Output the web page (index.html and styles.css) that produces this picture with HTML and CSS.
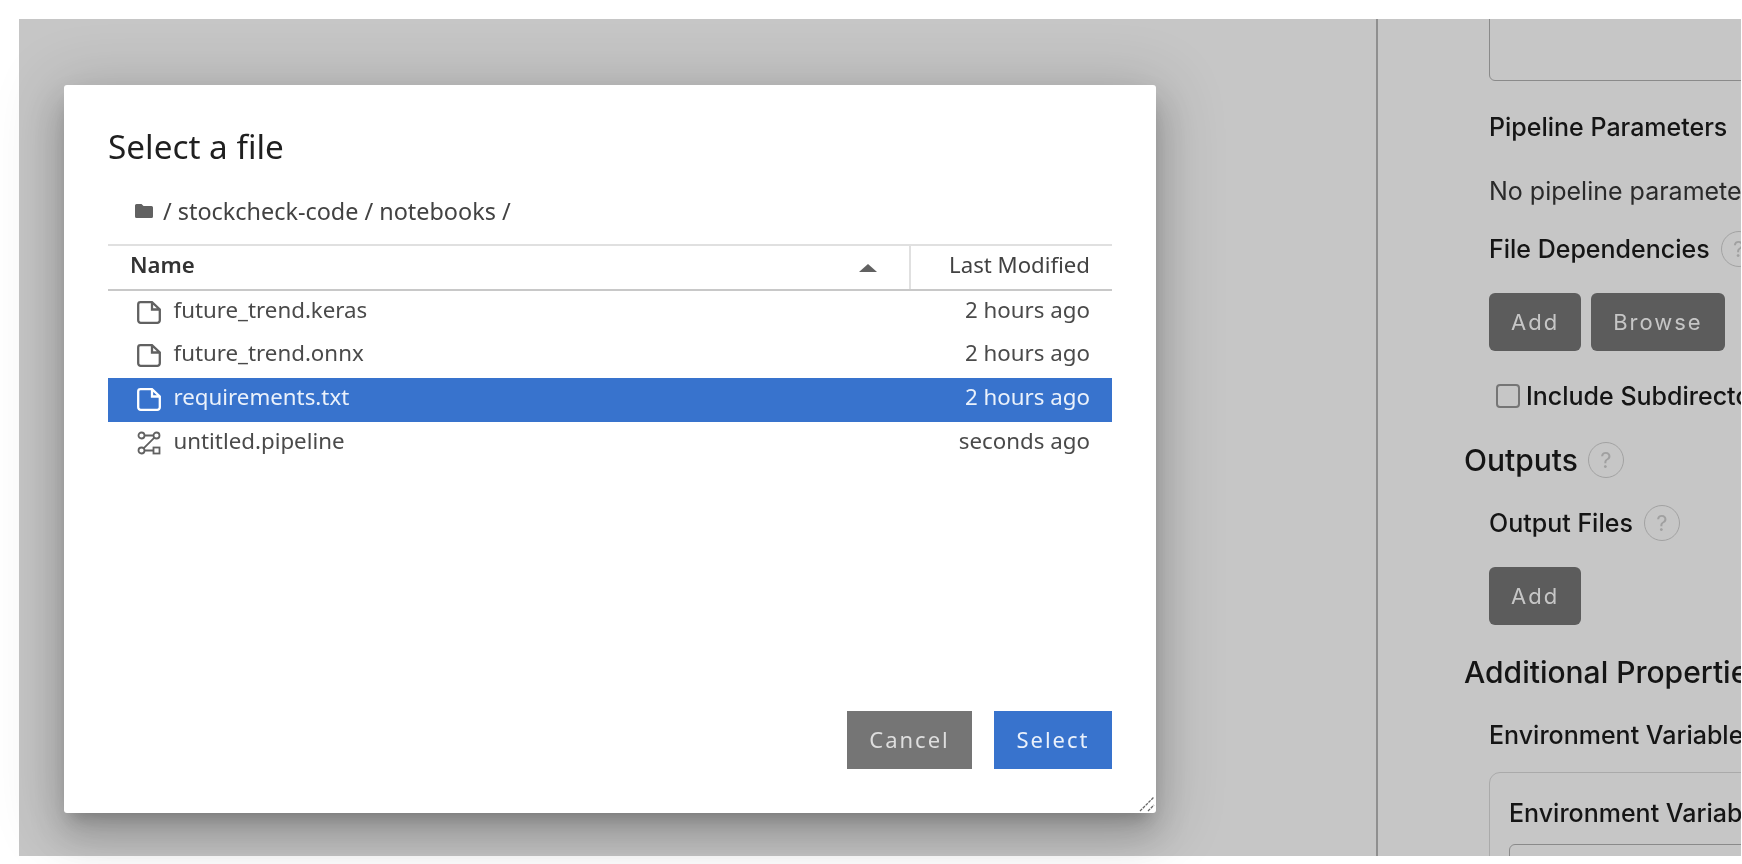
FILE: index.html
```html
<!DOCTYPE html>
<html lang="en">
<head>
<meta charset="utf-8">
<title>Select a file</title>
<link rel="stylesheet" href="styles.css">
</head>
<body>
<div class="app">
  <div class="canvas"></div>
  <aside class="panel">
    <div class="textbox"></div>
    <div class="label first">Pipeline Parameters</div>
    <div class="note">No pipeline parameters are defined.</div>
    <div class="label deps">File Dependencies <span class="help">?</span></div>
    <div class="btns"><span class="btn">Add</span><span class="btn">Browse</span></div>
    <label class="check"><span class="box"></span>Include Subdirectories</label>
    <div class="heading outs">Outputs <span class="help">?</span></div>
    <div class="label ofiles">Output Files <span class="help">?</span></div>
    <div class="btns addout"><span class="btn">Add</span></div>
    <div class="heading addl">Additional Properties</div>
    <div class="label envl">Environment Variables</div>
    <div class="envbox">
      <div class="label envin">Environment Variables</div>
      <div class="envinput"></div>
    </div>
  </aside>
</div>

<div class="dialog">
  <h1 class="title">Select a file</h1>
  <div class="crumbs">
    <svg class="folder" viewBox="0 0 18 14" width="18" height="14"><path d="M1.5 0h5l2 2h8A1.5 1.5 0 0 1 18 3.500V12.500A1.500 1.500 0 0 1 16.500 14h-15A1.500 1.500 0 0 1 0 12.500V1.500A1.500 1.500 0 0 1 1.500 0z" fill="#616161"/></svg>
    <span>/ stockcheck-code / notebooks /</span>
  </div>
  <div class="table">
    <div class="thead">
      <div class="th-name"><span class="th-text">Name</span><svg class="caret" viewBox="0 0 18 8" width="18" height="8"><path d="M9 0l9 8H0z" fill="#616161"/></svg></div>
      <div class="th-mod"><span class="th-text">Last Modified</span></div>
    </div>
    <div class="row">
      <svg class="ficon" viewBox="0 0 24 23" width="24" height="23"><path d="M3.500 1.200H15L22.800 8.500V19.300a2.500 2.500 0 0 1-2.500 2.500H3.700a2.500 2.500 0 0 1-2.500-2.500V3.500A2.300 2.300 0 0 1 3.500 1.200zM15 1.200V8.500H22.800" fill="none" stroke="currentColor" stroke-width="2.300"/></svg>
      <span class="fname">future_trend.keras</span><span class="fdate">2 hours ago</span>
    </div>
    <div class="row">
      <svg class="ficon" viewBox="0 0 24 23" width="24" height="23"><path d="M3.500 1.200H15L22.800 8.500V19.300a2.500 2.500 0 0 1-2.500 2.500H3.700a2.500 2.500 0 0 1-2.500-2.500V3.500A2.300 2.300 0 0 1 3.500 1.200zM15 1.200V8.500H22.800" fill="none" stroke="currentColor" stroke-width="2.300"/></svg>
      <span class="fname">future_trend.onnx</span><span class="fdate">2 hours ago</span>
    </div>
    <div class="row selected">
      <svg class="ficon" viewBox="0 0 24 23" width="24" height="23"><path d="M3.500 1.200H15L22.800 8.500V19.300a2.500 2.500 0 0 1-2.500 2.500H3.700a2.500 2.500 0 0 1-2.500-2.500V3.500A2.300 2.300 0 0 1 3.500 1.200zM15 1.200V8.500H22.800" fill="none" stroke="currentColor" stroke-width="2.300"/></svg>
      <span class="fname">requirements.txt</span><span class="fdate">2 hours ago</span>
    </div>
    <div class="row">
      <svg class="ficon" viewBox="0 0 24 24" width="24" height="24" fill="none" stroke="currentColor" stroke-width="1.800"><circle cx="4.500" cy="4.500" r="3"/><circle cx="19.500" cy="4.500" r="3"/><circle cx="4.500" cy="19.500" r="3"/><rect x="16.500" y="16.500" width="6" height="6"/><path d="M7.500 4.500h9M6.600 17.400L17.400 6.600M7.500 19.500h9"/></svg>
      <span class="fname">untitled.pipeline</span><span class="fdate">seconds ago</span>
    </div>
  </div>
  <div class="actions">
    <span class="dbtn cancel">Cancel</span>
    <span class="dbtn select">Select</span>
  </div>
  <svg class="grip" viewBox="0 0 16 16" width="16" height="16"><path d="M1 15L15 1M9 15l6-6" stroke="#666" stroke-width="1.300" stroke-dasharray="3 1" fill="none"/></svg>
</div>
</body>
</html>
```

FILE: styles.css
```css
* { box-sizing: border-box; }
html, body { margin: 0; height: 100%; background: #fff; overflow: hidden; }
body { padding: 19px 1px 8px 19px; filter: blur(0.45px); }

.app {
  display: flex;
  height: 837px;
  background: #c6c6c6;
  overflow: hidden;
  font-family: Inter, "Liberation Sans", sans-serif;
  color: #151515;
}
.canvas { width: 1359px; flex: none; border-right: 2px solid #8f8f8f; }
.panel { flex: 1; min-width: 0; padding-left: 111px; white-space: nowrap; overflow: hidden; }

.textbox {
  height: 81px;
  margin-top: -19px;
  width: 400px;
  border: 1.500px solid #8a8a8a;
  border-radius: 6px;
}
.label { font-size: 25px; font-weight: 500; line-height: 36px; display: flex; align-items: center; gap: 11px; }
.first { margin-top: 28px; }
.note { font-size: 25px; line-height: 36px; margin-top: 28px; color: #2a2a2a; }
.deps { margin-top: 22px; }
.help {
  width: 36px; height: 36px; flex: none;
  border: 1.500px solid #a2a2a2;
  border-radius: 50%;
  color: #a0a0a0;
  font-size: 22px; font-weight: 400;
  display: flex; align-items: center; justify-content: center;
}
.btns { display: flex; gap: 10px; margin-top: 26px; }
.btn {
  height: 58px; padding: 0 22px;
  background: #5c5c5c;
  border-radius: 6px;
  color: #c6c6c6;
  font-size: 22px; letter-spacing: 2px;
  display: flex; align-items: center;
}
.check { display: flex; align-items: center; margin: 27px 0 0 7px; font-size: 25px; font-weight: 500; line-height: 36px; gap: 6px; height: 36px; }
.box { width: 24px; height: 24px; border: 2px solid #757575; border-radius: 4px; flex: none; }
.heading { font-size: 30px; font-weight: 500; line-height: 36px; display: flex; align-items: center; gap: 10px; margin-left: -25px; }
.outs { margin-top: 28px; }
.ofiles { margin-top: 27px; }
.addout { margin-top: 26px; }
.addl { margin-top: 29px; }
.envl { margin-top: 27px; }
.envbox { margin-top: 19px; width: 400px; height: 200px; border: 1.500px solid #aaa; border-radius: 11px; padding: 22px 19px; }
.envin { margin: 0; }
.envinput { height: 60px; margin-top: 13px; border: 1.500px solid #8a8a8a; border-radius: 6px; }

.dialog {
  position: absolute;
  left: 64px; top: 85px;
  width: 1092px; height: 728px;
  background: #fff;
  border-radius: 3px;
  box-shadow: 0 11px 15px -7px rgba(0,0,0,.2), 0 22px 34px 3px rgba(0,0,0,.14), 0 9px 64px 10px rgba(0,0,0,.16);
  padding: 40px 44px 0;
  font-family: "Noto Sans", Roboto, sans-serif;
  color: #424242;
}
.title { margin: 0; font-size: 33.300px; font-weight: 400; line-height: 42px; color: #1f1f1f; }
.crumbs { display: flex; align-items: center; gap: 10px; margin: 26px 0 0 27px; font-size: 23.400px; line-height: 36px; }
.table { margin-top: 15px; }
.thead { display: flex; height: 47px; border-top: 2px solid #e0e0e0; border-bottom: 2px solid #c8c8c8; font-size: 22.200px; }
.th-text { padding-bottom: 6px; }
.th-name { flex: 1; display: flex; align-items: center; justify-content: space-between; padding: 0 32px 0 22px; font-weight: 600; color: #333; }
.th-mod { width: 203px; border-left: 2px solid #e0e0e0; display: flex; align-items: center; justify-content: flex-end; padding-right: 22px; }
.row { height: 43.600px; display: flex; align-items: center; padding: 0 22px 0 29px; font-size: 22.300px; color: #4a4a4a; }
.row .ficon { flex: none; margin-right: 12.500px; margin-bottom: 1px; color: #616161; }
.fname, .fdate { padding-bottom: 7px; }
.fname { flex: 1; }
.selected { background: #3873cd; color: #eaf1fb; }
.selected .ficon { color: #fff; }
.actions { position: absolute; right: 44px; top: 626px; display: flex; gap: 22px; }
.dbtn { height: 58px; padding-bottom: 3px; display: flex; align-items: center; justify-content: center; color: #dedede; font-size: 22px; letter-spacing: 2px; }
.cancel { width: 125px; background: #757575; }
.select { width: 118px; background: #3873cd; color: #eaf1fb; }
.grip { position: absolute; right: 1px; bottom: 1px; }
```
